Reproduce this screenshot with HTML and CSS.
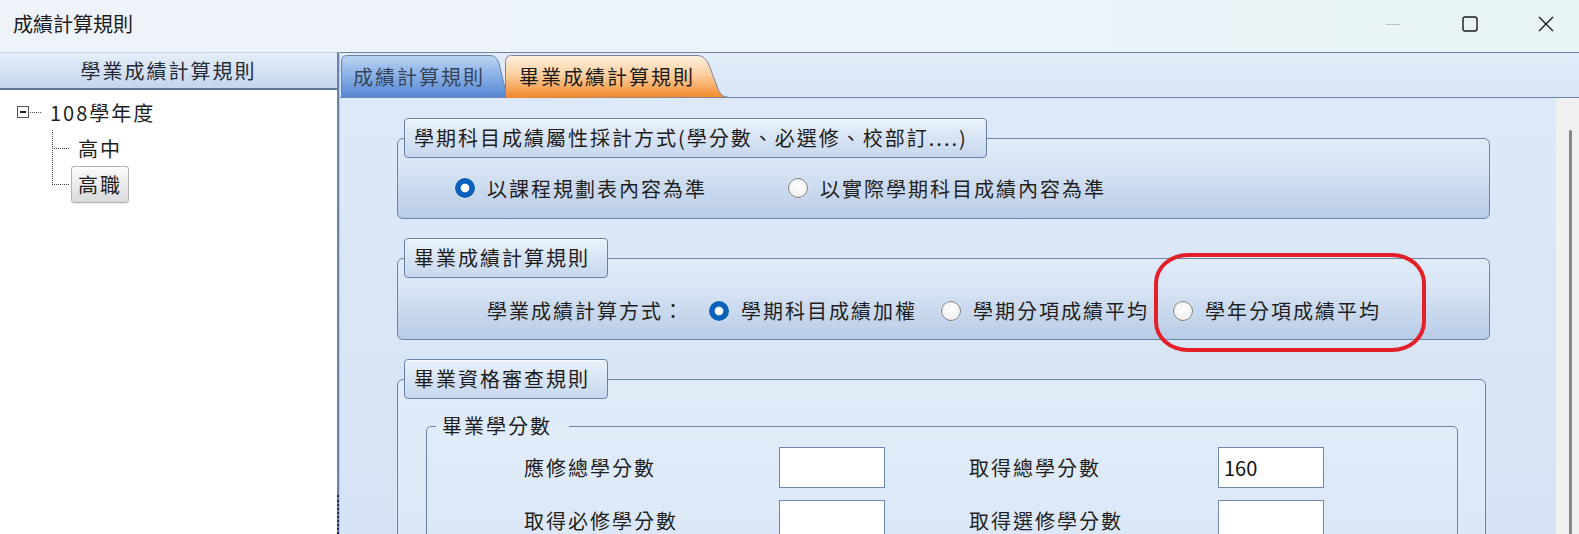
FILE: index.html
```html
<!DOCTYPE html>
<html lang="zh-Hant">
<head>
<meta charset="utf-8">
<title>成績計算規則</title>
<link rel="stylesheet" href="styles.css">
</head>
<body>
<div class="window">
  <header class="titlebar">
    <span class="title">成績計算規則</span>
    <div class="controls">
      <span class="ctl"><svg width="16" height="16" viewBox="0 0 16 16"><path d="M1 8.5H15" stroke="#c2c2c2" stroke-width="1"/></svg></span>
      <span class="ctl"><svg width="16" height="16" viewBox="0 0 16 16"><rect x="1" y="1" width="14" height="14" rx="2" fill="none" stroke="#1a1a1a" stroke-width="1.4"/></svg></span>
      <span class="ctl ctl-close"><svg width="16" height="16" viewBox="0 0 16 16"><path d="M1 1L15 15M15 1L1 15" stroke="#1a1a1a" stroke-width="1.4"/></svg></span>
    </div>
  </header>

  <div class="main">
    <aside class="left">
      <div class="left-header">學業成績計算規則</div>
      <div class="tree">
        <div class="tree-root">
          <span class="expander"></span>
          <span class="root-link"></span>
          <span class="root-label">108學年度</span>
        </div>
        <div class="children">
          <div class="child">
            <span class="branch"></span>
            <span class="node">高中</span>
          </div>
          <div class="child">
            <span class="branch branch-last"></span>
            <span class="node node-selected">高職</span>
          </div>
        </div>
      </div>
    </aside>

    <div class="splitter"><div class="grip"></div></div>

    <section class="right">
      <div class="tabstrip">
        <div class="tab tab-blue">
          <svg width="166" height="42" viewBox="0 0 166 42">
            <defs>
              <linearGradient id="gblue" x1="0" y1="0" x2="0" y2="1">
                <stop offset="0" stop-color="#bcd4f3"/>
                <stop offset="0.45" stop-color="#8db3e8"/>
                <stop offset="1" stop-color="#5787d3"/>
              </linearGradient>
            </defs>
            <path d="M0.5 42V6.5Q0.5 0.5 6.5 0.5H148C154 0.5 156 3 158 8L166 42" fill="url(#gblue)" stroke="#6f82a4" stroke-width="1"/>
          </svg>
          <span class="tab-text">成績計算規則</span>
        </div>
        <div class="tab tab-orange">
          <svg width="223" height="43" viewBox="0 0 223 43">
            <defs>
              <linearGradient id="gorange" x1="0" y1="0" x2="0" y2="1">
                <stop offset="0" stop-color="#fff0e0"/>
                <stop offset="0.45" stop-color="#fcd0a0"/>
                <stop offset="1" stop-color="#f1872a"/>
              </linearGradient>
            </defs>
            <path d="M0.5 43V6.5Q0.5 0.5 6.5 0.5H192C198 0.5 201 4 204 10L213 34C216 41 219 42 223 42" fill="url(#gorange)" stroke="#7a86a0" stroke-width="1"/>
          </svg>
          <span class="tab-text">畢業成績計算規則</span>
        </div>
      </div>

      <div class="content">
        <div class="page">
          <fieldset class="group">
            <legend class="group-title title-wide">學期科目成績屬性採計方式(學分數、必選修、校部訂....)</legend>
            <div class="radio-row row-source">
              <label class="opt"><span class="radio radio-on"></span>以課程規劃表內容為準</label>
              <label class="opt"><span class="radio"></span>以實際學期科目成績內容為準</label>
            </div>
          </fieldset>

          <fieldset class="group">
            <legend class="group-title title-short">畢業成績計算規則</legend>
            <div class="radio-row row-calc">
              <span class="row-label">學業成績計算方式：</span>
              <label class="opt"><span class="radio radio-on"></span>學期科目成績加權</label>
              <label class="opt"><span class="radio"></span>學期分項成績平均</label>
              <label class="opt"><span class="radio"></span>學年分項成績平均</label>
            </div>
          </fieldset>

          <fieldset class="group group-tall">
            <legend class="group-title title-short">畢業資格審查規則</legend>
            <fieldset class="subgroup">
              <legend class="sublegend">畢業學分數</legend>
              <div class="credit-grid">
                <span class="field-label">應修總學分數</span>
                <input class="field" type="text" value="" readonly>
                <span></span>
                <span class="field-label">取得總學分數</span>
                <input class="field" type="text" value="160" readonly>
                <span class="field-label">取得必修學分數</span>
                <input class="field" type="text" value="" readonly>
                <span></span>
                <span class="field-label">取得選修學分數</span>
                <input class="field" type="text" value="" readonly>
              </div>
            </fieldset>
          </fieldset>
        </div>
        <div class="vscroll"><div class="thumb"></div></div>
      </div>
    </section>
  </div>

  <div class="annotation"></div>
</div>
</body>
</html>
```
FILE: styles.css
```css
html, body {
  margin: 0;
  padding: 0;
}

body {
  font-family: "Noto Sans CJK TC", "Noto Sans", sans-serif;
  background: #dbe7f6;
}

.window {
  position: relative;
  width: 1579px;
  height: 534px;
  overflow: hidden;
  display: flex;
  flex-direction: column;
  font-size: 20px;
  letter-spacing: 2px;
  color: #1f1f1f;
}

/* ---------- title bar ---------- */
.titlebar {
  flex: none;
  height: 52px;
  box-sizing: border-box;
  padding-bottom: 5px;
  display: flex;
  align-items: center;
  background: linear-gradient(to right, #eef3fa, #e9f4f7);
  letter-spacing: 0;
}

.title {
  padding-left: 13px;
  font-size: 20px;
  color: #1a1a1a;
}

.controls {
  margin-left: auto;
  display: flex;
  align-self: stretch;
}

.ctl {
  width: 77px;
  display: flex;
  align-items: center;
  justify-content: center;
}

.ctl-close {
  width: 71px;
  padding-left: 4px;
  box-sizing: border-box;
}

.ctl svg {
  display: block;
}

/* ---------- main ---------- */
.main {
  flex: 1;
  display: flex;
  min-height: 0;
}

.left {
  flex: none;
  width: 337px;
  display: flex;
  flex-direction: column;
  background: #fff;
}

.left-header {
  flex: none;
  height: 38px;
  box-sizing: border-box;
  border-top: 1px solid #c3d0e3;
  border-bottom: 2px solid #5f769b;
  background: linear-gradient(#e5eef9, #c4d6ed);
  display: flex;
  align-items: center;
  justify-content: center;
  color: #262a35;
}

.tree {
  padding: 4px 0 0 17px;
}

.tree-root {
  display: flex;
  align-items: center;
  height: 36px;
}

.expander {
  width: 12px;
  height: 12px;
  box-sizing: border-box;
  border: 1px solid #555;
  background: #fff;
  display: flex;
  align-items: center;
  justify-content: center;
}

.expander::before {
  content: "";
  width: 6px;
  height: 2px;
  background: #222;
}

.root-link {
  width: 11px;
  height: 1px;
  margin: 0 9px 0 1px;
  background: repeating-linear-gradient(to right, #555 0 1px, transparent 1px 2px);
}

.children {
  margin-left: 35px;
}

.child {
  display: flex;
  align-items: center;
  height: 36px;
}

.child + .child {
  height: 37px;
}

.branch {
  width: 19px;
  align-self: stretch;
  background-image:
    repeating-linear-gradient(to bottom, #444 0 1px, transparent 1px 2px),
    repeating-linear-gradient(to right, #444 0 1px, transparent 1px 2px);
  background-size: 1px 100%, 18px 1px;
  background-position: 0 0, 0 50%;
  background-repeat: no-repeat;
}

.branch-last {
  background-size: 1px 50%, 18px 1px;
}

.node {
  height: 36px;
  box-sizing: border-box;
  padding: 0 6px 0 6px;
  border: 1px solid transparent;
  border-radius: 3px;
  display: flex;
  align-items: center;
}

.node-selected {
  height: 37px;
  background: linear-gradient(#fbfbfb, #dadada);
  border-color: #b4b4b4;
  box-shadow: 0 1px 1px rgba(0, 0, 0, 0.08);
}

.splitter {
  flex: none;
  width: 3px;
  background: linear-gradient(to right, #6c83a9 0 2px, #b7c9e3 2px);
  display: flex;
  flex-direction: column;
  justify-content: flex-end;
}

.grip {
  height: 39px;
  border-left: 2px dotted #1d2c5c;
}

/* ---------- right ---------- */
.right {
  flex: 1;
  min-width: 0;
  display: flex;
  flex-direction: column;
}

.tabstrip {
  flex: none;
  height: 46px;
  box-sizing: border-box;
  border-top: 1px solid #6f83a6;
  border-bottom: 1px solid #6d83a8;
  background: linear-gradient(#e2ecf9, #d8e6f6);
  display: flex;
  align-items: flex-end;
  padding-left: 1px;
}

.tab {
  display: grid;
  height: 42px;
}

.tab > svg,
.tab > .tab-text {
  grid-area: 1 / 1;
}

.tab > svg {
  display: block;
}

.tab-text {
  align-self: center;
  padding-top: 1px;
}

.tab-blue .tab-text {
  padding-left: 12px;
  color: #36445a;
}

.tab-orange {
  height: 43px;
  margin-left: -2px;
  margin-bottom: -1px;
}

.tab-orange .tab-text {
  padding-left: 14px;
  padding-bottom: 1px;
  color: #1a1a1a;
}

.content {
  flex: 1;
  min-height: 0;
  display: flex;
  overflow: hidden;
}

.page {
  flex: 1;
  min-width: 0;
  padding: 20px 0 0 57px;
  background: linear-gradient(#dde9f8, #d5e3f4);
  overflow: hidden;
}

.vscroll {
  flex: none;
  width: 23px;
  box-sizing: border-box;
  padding-top: 32px;
  background: #f0f0f0;
}

.thumb {
  width: 3px;
  margin-left: 13px;
  height: 500px;
  border-radius: 2px;
  background: #878787;
}

/* ---------- group boxes ---------- */
.group {
  width: 1093px;
  box-sizing: border-box;
  margin: 0 0 19px;
  padding: 0;
  min-width: 0;
  border: 1px solid #6d84a9;
  border-radius: 6px;
  background: linear-gradient(#e0ebf8 0%, #dbe7f6 28%, #b9cce6 100%);
}

.group-title {
  margin-left: 6px;
  padding: 0 0 0 9px;
  height: 40px;
  box-sizing: border-box;
  line-height: 37px;
  border: 1px solid #6a81a7;
  border-radius: 4px;
  background: linear-gradient(#eaf1fb, #c6d7ee);
  box-shadow: inset 0 1px 0 rgba(255, 255, 255, 0.6);
  color: #1c1c1c;
  white-space: nowrap;
}

.title-wide {
  width: 583px;
}

.title-short {
  width: 204px;
}

.radio-row {
  display: flex;
  align-items: center;
}

.row-source {
  height: 60px;
  padding-left: 57px;
}

.row-source .opt + .opt {
  margin-left: 81px;
}

.row-calc {
  height: 57px;
  padding: 4px 0 0 89px;
}

.row-calc .opt {
  margin-left: 24px;
}

.opt {
  display: flex;
  align-items: center;
  white-space: nowrap;
}

.radio {
  flex: none;
  width: 20px;
  height: 20px;
  box-sizing: border-box;
  margin-right: 12px;
  border-radius: 50%;
  border: 1.5px solid #7c7c7c;
  background: radial-gradient(circle at 50% 40%, #ffffff 0, #f4f4f4 60%, #e6e6e6 100%);
  box-shadow: 0 0 0 0.5px rgba(255, 255, 255, 0.6);
}

.radio-on {
  border: none;
  background: radial-gradient(circle, #ffffff 0 3.8px, #0a60ba 4.8px 100%);
}

.group-tall {
  width: 1089px;
  height: 560px;
  background: linear-gradient(#e0ebf8 0%, #d9e6f6 50%, #c4d5ec 100%);
}

.subgroup {
  width: 1032px;
  box-sizing: border-box;
  margin: 13px 0 0 28px;
  padding: 0 0 120px;
  min-width: 0;
  border: 1px solid #6d84a9;
  border-radius: 5px;
  background: linear-gradient(#e1ecf9, #d5e3f4);
}

.sublegend {
  margin-left: 9px;
  padding: 0 17px 0 6px;
  line-height: 28px;
  color: #1c1c1c;
}

.credit-grid {
  display: grid;
  grid-template-columns: 255px 106px 84px 249px 106px;
  grid-auto-rows: 41px;
  row-gap: 12px;
  align-items: center;
  padding: 7px 0 0 97px;
}

.field-label {
  white-space: nowrap;
}

.field {
  width: 106px;
  height: 41px;
  box-sizing: border-box;
  margin: 0;
  padding: 0 5px;
  border: 1px solid #6f87ad;
  background: #fff;
  font: inherit;
  letter-spacing: 0;
  color: #111;
  outline: none;
}

/* ---------- annotation overlay ---------- */
.annotation {
  position: absolute;
  left: 1154px;
  top: 253px;
  width: 272px;
  height: 99px;
  box-sizing: border-box;
  border: 4px solid #e3202a;
  border-radius: 34px / 30px;
  pointer-events: none;
}
```
